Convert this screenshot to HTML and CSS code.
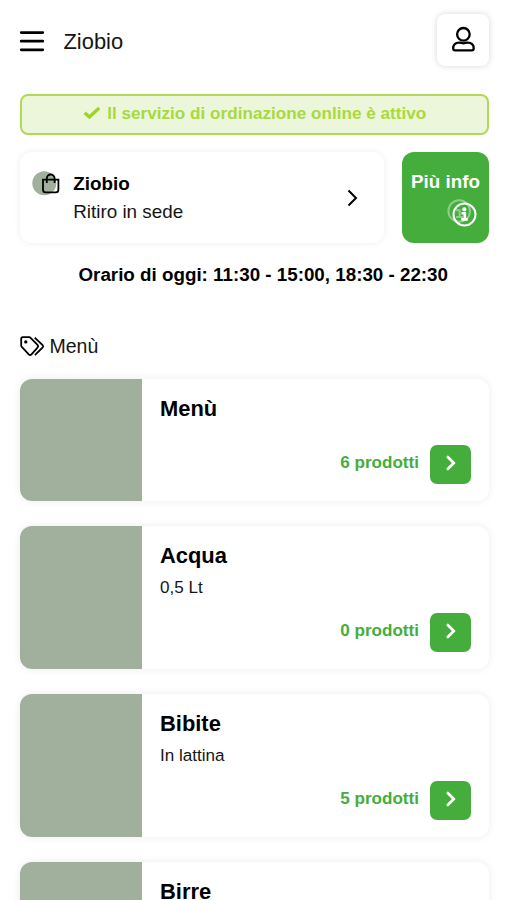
FILE: index.html
```html
<!DOCTYPE html>
<html lang="it">
<head>
<meta charset="utf-8">
<meta name="viewport" content="width=device-width, initial-scale=1">
<title>Ziobio</title>
<link rel="stylesheet" href="styles.css">
</head>
<body>
<header class="topbar">
  <svg class="burger" viewBox="0 0 24 21"><path d="M1.2 1.6H22.8M1.2 10.2H22.8M1.2 18.8H22.8"/></svg>
  <h1 class="brand">Ziobio</h1>
  <button class="account" aria-label="Account">
    <svg viewBox="0 0 24 28"><circle cx="12.4" cy="8.3" r="6.3"/><path d="M8 16.6C10 16.6 10.8 17.3 12.4 17.3s2.4-.7 4.4-.7c4 0 5.9 2.8 5.9 5.7 0 1.4-.7 2.1-1.8 2.1H4c-1.1 0-1.8-.7-1.8-2.1 0-2.9 1.8-5.7 5.8-5.7z"/></svg>
  </button>
</header>
<main>
  <div class="status">
    <svg viewBox="0 0 18 14"><path d="M1.7 6.7L6.4 11L16.2 2"/></svg>
    <span>Il servizio di ordinazione online è attivo</span>
  </div>
  <div class="info-row">
    <section class="pickup">
      <svg class="bag" viewBox="0 0 28 26"><circle cx="12.3" cy="12.2" r="12"/><path d="M11 8.6H26.4V18.8Q26.4 21.4 23.8 21.4H13.6Q11 21.4 11 18.8ZM14.8 12V7.4A3.9 3.9 0 0 1 22.6 7.4V12"/></svg>
      <div class="pickup-text"><strong>Ziobio</strong><span>Ritiro in sede</span></div>
      <svg class="arrow" viewBox="0 0 11 18"><path d="M1.5 1.5L9 9L1.5 16.5"/></svg>
    </section>
    <button class="more">
      <span>Più info</span>
      <svg viewBox="0 0 30 28"><g class="echo"><circle cx="12.2" cy="12" r="10.8"/><path d="M9 11.3H12.6V18M9 18H16"/></g><circle class="ring" cx="17.5" cy="15.5" r="11"/><circle class="dot" cx="17.3" cy="10.3" r="2.1"/><path class="stem" d="M14.5 14.3H17.8V20.4M14.3 20.4H20.8"/></svg>
    </button>
  </div>
  <p class="hours">Orario di oggi: 11:30 - 15:00, 18:30 - 22:30</p>
  <h2 class="section">
    <svg viewBox="0 0 25 21"><path d="M1.2 2.8Q1.2 1.2 2.8 1.2H9.3Q10 1.2 10.6 1.8L17.3 8.7Q18.8 10.2 17.3 11.8L11.5 18.3Q10.2 19.7 8.8 18.3L1.8 10.9Q1.2 10.3 1.2 9.5ZM14.7 1.6L22.6 9.1Q23.8 10.2 22.7 11.4L14.9 19.2"/><circle cx="5.8" cy="5.9" r="1.7"/></svg>
    <span>Menù</span>
  </h2>
  <div class="cards">
    <article class="card short"><div class="thumb"></div><div class="body"><h3>Menù</h3><div class="foot"><span>6 prodotti</span><button aria-label="Apri"><svg viewBox="0 0 10 16"><path d="M1.8 2L7.8 8L1.8 14"/></svg></button></div></div></article>
    <article class="card"><div class="thumb"></div><div class="body"><h3>Acqua</h3><p>0,5 Lt</p><div class="foot"><span>0 prodotti</span><button aria-label="Apri"><svg viewBox="0 0 10 16"><path d="M1.8 2L7.8 8L1.8 14"/></svg></button></div></div></article>
    <article class="card"><div class="thumb"></div><div class="body"><h3>Bibite</h3><p>In lattina</p><div class="foot"><span>5 prodotti</span><button aria-label="Apri"><svg viewBox="0 0 10 16"><path d="M1.8 2L7.8 8L1.8 14"/></svg></button></div></div></article>
    <article class="card"><div class="thumb"></div><div class="body"><h3>Birre</h3></div></article>
  </div>
</main>
</body>
</html>
```
FILE: styles.css
```css
* { box-sizing: border-box; }
html { overflow: hidden; }
body {
  margin: 0;
  height: 900px;
  overflow: hidden;
  padding: 14px 18px 0 19.5px;
  background: #fff;
  color: #000;
  font-family: "Liberation Sans", Arial, sans-serif;
}
h1, h2, h3, p { margin: 0; }
button { border: 0; padding: 0; font: inherit; }
svg { display: block; fill: none; stroke: #000; flex: none; overflow: visible; }

.topbar { display: flex; align-items: center; height: 52px; }
.burger { width: 24px; height: 21px; margin: 2px 0 0; stroke-width: 2.7; stroke-linecap: round; }
.brand { margin: 3px 0 0 20px; font-size: 21.9px; font-weight: 400; line-height: 26px; color: #151515; }
.account {
  display: flex;
  align-items: center;
  justify-content: center;
  width: 52px;
  height: 52px;
  margin-left: auto;
  border-radius: 8px;
  background: #fff;
  box-shadow: 0 0 6px rgba(0, 0, 0, .16);
}
.account svg { width: 24px; height: 28px; stroke-width: 2.3; }

.status {
  display: flex;
  align-items: center;
  justify-content: center;
  gap: 6px;
  height: 41px;
  margin: 28px 0 17.4px;
  padding: 0 0 3px 1px;
  border: 2px solid #b0d957;
  border-radius: 8px;
  background: #ecf6da;
  color: #a9d93f;
  font-size: 17.15px;
  font-weight: 700;
}
.status svg { width: 18px; height: 14px; stroke: #9fd32b; stroke-width: 3.3; }

.info-row { display: flex; gap: 18px; height: 91px; }
.pickup {
  display: flex;
  flex: 1;
  padding: 18px 26px 0 12px;
  border-radius: 12px;
  background: #fff;
  box-shadow: 0 0 7px rgba(0, 0, 0, .07);
}
.bag { width: 28px; height: 26px; margin-top: 1px; stroke-width: 1.8; }
.bag circle { fill: #a0b09c; stroke: none; }
.pickup-text {
  display: flex;
  flex-direction: column;
  flex: 1;
  margin-left: 13.7px;
  font-size: 18.85px;
  line-height: 27.5px;
}
.pickup-text span { color: #151515; }
.arrow { width: 11px; height: 18px; margin-top: 19px; stroke-width: 2; }
.more {
  display: flex;
  flex-direction: column;
  align-items: center;
  width: 87px;
  padding-top: 18px;
  border-radius: 12px;
  background: #44ad3c;
  color: #fff;
  font-size: 18.8px;
  font-weight: 700;
  line-height: 24px;
}
.more svg { width: 30px; height: 28px; align-self: flex-end; margin: 4.5px 12px 0 0; stroke: #fff; stroke-width: 2; }
.more .echo { opacity: .4; }
.more .dot { fill: #fff; stroke: none; }
.more .stem { stroke-width: 2.6; }

.hours { margin: 18.6px 0 0 18px; font-size: 18.8px; font-weight: 700; line-height: 26px; text-align: center; white-space: nowrap; }

.section {
  display: flex;
  align-items: center;
  gap: 5px;
  margin: 45px 0 20px;
  font-size: 19.5px;
  font-weight: 400;
  line-height: 26px;
  color: #151515;
}
.section svg { width: 25px; height: 21px; margin-top: 1px; stroke-width: 1.8; }
.section circle { fill: #000; stroke: none; }

.cards { display: flex; flex-direction: column; gap: 24.5px; }
.card {
  display: flex;
  flex: none;
  height: 143.5px;
  overflow: hidden;
  border-radius: 12px;
  background: #fff;
  box-shadow: 0 0 8px rgba(0, 0, 0, .08);
}
.card.short { height: 122.3px; }
.thumb { width: 122px; background: #a0b09c; }
.body { display: flex; flex-direction: column; flex: 1; padding: 17px 18.5px 17.6px; }
.card h3 { font-size: 21.9px; line-height: 26px; }
.card p { margin-top: 8px; font-size: 17.1px; line-height: 22px; color: #151515; }
.foot { display: flex; align-items: center; justify-content: flex-end; gap: 10.5px; margin-top: auto; }
.foot span { color: #44ad3c; font-size: 17.1px; font-weight: 700; line-height: 20px; padding-bottom: 2.6px; }
.foot button {
  display: flex;
  align-items: center;
  justify-content: center;
  width: 41px;
  height: 39px;
  border-radius: 7px;
  background: #44ad3c;
}
.foot svg { width: 10px; height: 16px; margin: 0 0 2px 1px; stroke: #fff; stroke-width: 2.7; stroke-linecap: round; }
```
